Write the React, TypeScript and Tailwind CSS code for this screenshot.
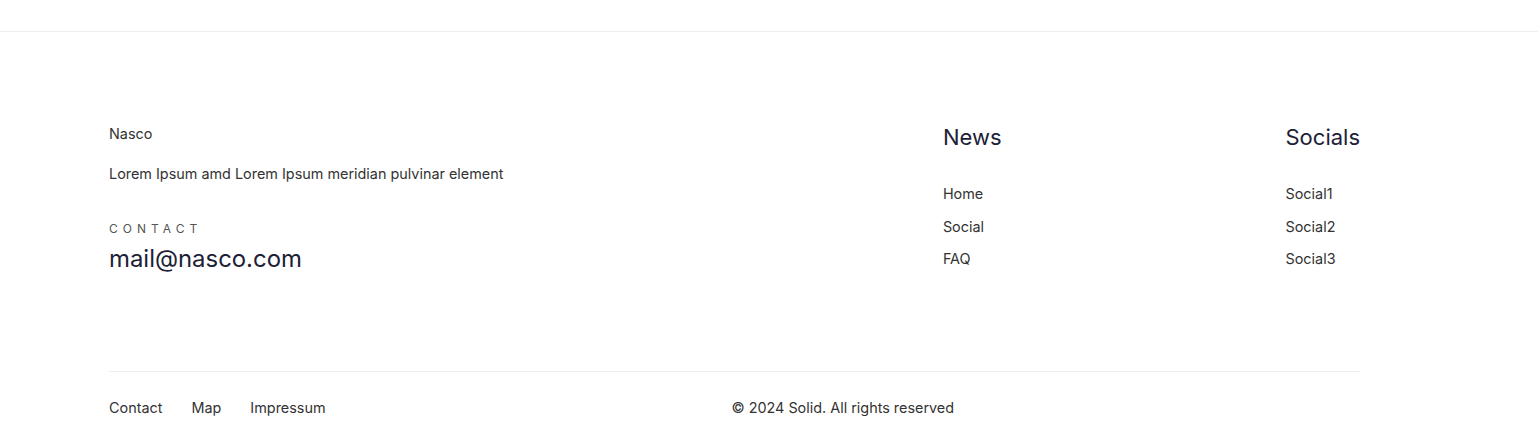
export default function App() {
  const news = ["Home", "Social", "FAQ"];
  const socials = ["Social1", "Social2", "Social3"];

  return (
    <div className="min-h-screen bg-white font-['Inter',sans-serif] text-[#333]">
      <header className="h-8 border-b border-[#eeeeee]" />

      <footer className="ml-[109px] w-[1251px]">
        <div className="flex justify-between pt-[92px] pb-[96px]">
          <div className="flex flex-col">
            <p className="text-[14.4px] leading-5">Nasco</p>
            <p className="mt-5 text-[14.4px] leading-5">
              Lorem Ipsum amd Lorem Ipsum meridian pulvinar element
            </p>
            <p className="mt-[37px] text-xs leading-4 tracking-[0.42em] text-[#555]">
              CONTACT
            </p>
            <a className="mt-[6px] text-[23.9px] leading-8 text-[#1c2136]">
              mail@nasco.com
            </a>
          </div>

          <div className="flex gap-[284px]">
            <div className="flex flex-col">
              <h4 className="text-[22px] leading-[26px] text-[#1c2136]">News</h4>
              <ul className="mt-[34px] flex flex-col gap-[12.5px]">
                {news.map((n) => (
                  <li key={n} className="text-[14.4px] leading-5">
                    {n}
                  </li>
                ))}
              </ul>
            </div>
            <div className="flex flex-col">
              <h4 className="text-[22px] leading-[26px] text-[#1c2136]">Socials</h4>
              <ul className="mt-[34px] flex flex-col gap-[12.5px]">
                {socials.map((n) => (
                  <li key={n} className="text-[14.4px] leading-5">
                    {n}
                  </li>
                ))}
              </ul>
            </div>
          </div>
        </div>

        <div className="flex items-center justify-between border-t border-[#eeeeee] pt-[26px] text-[14.4px] leading-5">
          <ul className="flex gap-[29px]">
            <li>Contact</li>
            <li>Map</li>
            <li>Impressum</li>
          </ul>
          <p>© 2024 Solid. All rights reserved</p>
          <div />
        </div>
      </footer>
    </div>
  );
}
